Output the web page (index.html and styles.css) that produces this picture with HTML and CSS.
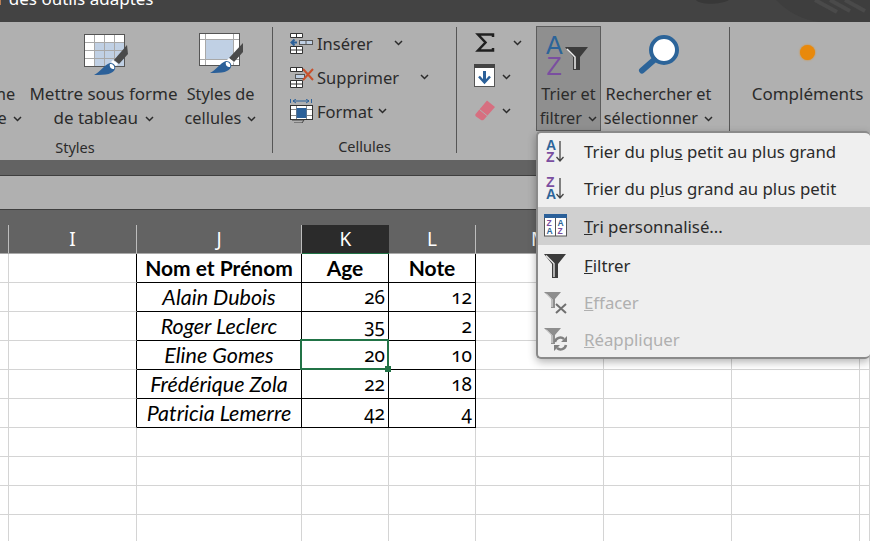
FILE: index.html
```html
<!DOCTYPE html>
<html lang="fr">
<head>
  <meta charset="UTF-8">
  <meta name="viewport" content="width=device-width, initial-scale=1.0">
  <title>Trier et filtrer</title>
  <link rel="stylesheet" href="styles.css">
</head>
<body>
  <svg class="defs" width="0" height="0">
    <symbol id="chev" viewBox="0 0 9 6"><path d="M1 1l3.500 3.500L8 1" fill="none" stroke="#2b2b2b" stroke-width="1.500"/></symbol>
  </svg>

  <div class="titlebar">
    <span class="tell">Rechercher des outils adaptés</span>
    <svg class="deco" width="180" height="22" viewBox="0 0 180 22">
      <path d="M6 0c4 5 24 5 33 0z" fill="#383838"/>
      <path d="M86 0c12 12 26 20 44 22h50V0z" fill="#3e3e3e"/>
      <path d="M125 0l22 12M140 0l20 11M155 0l20 11" stroke="#4a4a4a" stroke-width="4"/>
    </svg>
  </div>

  <div class="ribbon">
    <!-- Styles -->
    <div class="group g-styles">
      <div class="tools">
        <div class="big b-cond">
          <div class="ico"></div>
          <div class="lbl">Mise en forme<br>conditionnelle <svg class="chev"><use href="#chev"/></svg></div>
        </div>
        <div class="big b-table">
          <div class="ico">
            <svg width="46" height="46" viewBox="0 0 46 46">
              <rect x="1.500" y="2.500" width="40" height="32" fill="#fff" stroke="#555"/>
              <rect x="11" y="11" width="30" height="23" fill="#c0d0e4"/>
              <path d="M11.500 3v31M21.500 3v31M31.500 3v31M2 10.500h39M2 18.500h39M2 26.500h39" stroke="#a8a8a8"/>
              <path d="M44 13l1 9-9 10-5-4z" fill="#4a4a4a"/>
              <path d="M30 28l5 4-2 2-5-4z" fill="#fff"/>
              <path d="M27 31c4 0 6 3 5 6-2 5-8 6-21 6 6-3 10-10 16-12z" fill="#2b6099"/>
              <path d="M27 32c3 0 5 2 4 5-3 0-5-2-4-5z" fill="#fff"/>
            </svg>
          </div>
          <div class="lbl">Mettre sous forme<br>de tableau <svg class="chev"><use href="#chev"/></svg></div>
        </div>
        <div class="big b-cell">
          <div class="ico">
            <svg width="46" height="46" viewBox="0 0 46 46">
              <rect x="1.500" y="1.500" width="40" height="32" fill="#fff" stroke="#555"/>
              <rect x="8" y="8" width="27" height="19" fill="#c0d0e4"/>
              <path d="M7.500 2v31M35.500 2v31M2 7.500h39M2 27.500h39" stroke="#a8a8a8"/>
              <path d="M45 11l0 9-9 10-5-4z" fill="#4a4a4a"/>
              <path d="M31 26l5 4-2 2-5-4z" fill="#fff"/>
              <path d="M28 29c4 0 6 3 5 6-2 5-8 6-21 6 6-3 10-10 16-12z" fill="#2b6099"/>
              <path d="M28 30c3 0 5 2 4 5-3 0-5-2-4-5z" fill="#fff"/>
            </svg>
          </div>
          <div class="lbl">Styles de<br>cellules <svg class="chev"><use href="#chev"/></svg></div>
        </div>
      </div>
      <div class="gname">Styles</div>
    </div>

    <!-- Cellules -->
    <div class="group g-cells">
      <div class="stack">
        <div class="small">
          <svg class="sico" width="23" height="22" viewBox="0 0 23 22">
            <path d="M.5 1.500h12v4H.5zM6.500 1.500v4M.5 14.500h12v7H.5zM.5 18h12M6.500 14.500v7" fill="#fff" stroke="#333"/>
            <rect x="9.500" y="8.500" width="13" height="4" fill="#c0d0e4" stroke="#555"/>
            <path d="M16 8.500v4" stroke="#555"/>
            <path d="M7 10.500H2M4.500 7.500l-3 3 3 3" fill="none" stroke="#2b6099" stroke-width="2"/>
          </svg>
          <span class="s-ins">Insérer</span>
          <svg class="chev c-ins"><use href="#chev"/></svg>
        </div>
        <div class="small">
          <svg class="sico" width="25" height="22" viewBox="0 0 25 22">
            <path d="M.5 1.500h12v4H.5zM6.500 1.500v4M.5 14.500h12v7H.5zM.5 18h12M6.500 14.500v7" fill="#fff" stroke="#333"/>
            <rect x="5.500" y="8.500" width="9" height="4" fill="#c0d0e4" stroke="#555"/>
            <path d="M13 3l10 11M23 3L13 14" stroke="#c8502c" stroke-width="2"/>
          </svg>
          <span class="s-sup">Supprimer</span>
          <svg class="chev c-sup"><use href="#chev"/></svg>
        </div>
        <div class="small">
          <svg class="sico" width="23" height="24" viewBox="0 0 23 24">
            <path d="M.5 0v4M21.500 0v4" stroke="#2b6099"/>
            <path d="M3 2h16M6 0L3 2l3 2M16 0l3 2-3 2" fill="none" stroke="#2b6099"/>
            <rect x=".5" y="6.500" width="22" height="14" fill="#fff" stroke="#333"/>
            <path d="M6.500 7v13M16.500 7v13M1 10.500h21M1 16.500h21" stroke="#888"/>
            <rect x="6.500" y="9" width="10" height="10" fill="#2b6099"/>
            <path d="M2 21h12l-2 3H4" fill="none" stroke="#444"/>
          </svg>
          <span class="s-ins">Format</span>
          <svg class="chev c-fmt"><use href="#chev"/></svg>
        </div>
      </div>
      <div class="gname">Cellules</div>
    </div>

    <!-- Edition -->
    <div class="group g-edit">
      <div class="tools">
        <div class="stack s-edit">
          <div class="small">
            <svg class="sico" width="22" height="22" viewBox="0 0 22 22">
              <path d="M19 5V2.500H4l7.500 8-7.500 8h15V16" fill="none" stroke="#1f1f1f" stroke-width="2.500"/>
            </svg>
            <svg class="chev c-sum"><use href="#chev"/></svg>
          </div>
          <div class="small">
            <svg class="sico s-fill" width="22" height="23" viewBox="0 0 22 23">
              <rect x=".5" y=".5" width="20" height="22" fill="#fff" stroke="#555"/>
              <rect x="0" y="0" width="21" height="4" fill="#444"/>
              <path d="M10.500 7v10" stroke="#2b6099" stroke-width="3"/>
              <path d="M5 12.500l5.500 6 5.500-6" fill="none" stroke="#2b6099" stroke-width="2.500"/>
            </svg>
            <svg class="chev c-edit"><use href="#chev"/></svg>
          </div>
          <div class="small">
            <svg class="sico" width="22" height="22" viewBox="0 0 22 22">
              <path d="M13 .5l8 6.500-11 12.500c-1 1-2 1-3 .5l-5-3.500c-1-1-1-2 0-3z" fill="#d66f80"/>
              <path d="M5.500 9.500l8 6.500" stroke="#b0b0b0"/>
            </svg>
            <svg class="chev c-edit"><use href="#chev"/></svg>
          </div>
        </div>

        <div class="big b-sort">
          <div class="ico">
            <svg width="56" height="46" viewBox="0 0 56 46">
              <text class="az-a" x="5" y="22">A</text>
              <text class="az-z" x="5.500" y="43">Z</text>
              <path d="M24 15h23l-8 10v13h-7V25z" fill="#3c3c3c"/>
              <path d="M26 17l8 8v12" fill="none" stroke="#eee" stroke-width="1.500"/>
            </svg>
          </div>
          <div class="lbl">Trier et<br>filtrer <svg class="chev"><use href="#chev"/></svg></div>
        </div>

        <div class="big b-find">
          <div class="ico">
            <svg width="44" height="44" viewBox="0 0 44 44">
              <circle cx="27" cy="17" r="13" fill="#fff" stroke="#2c6499" stroke-width="4"/>
              <path d="M17 27L5 37.500" stroke="#2c6499" stroke-width="6" stroke-linecap="round"/>
            </svg>
          </div>
          <div class="lbl">Rechercher et<br>sélectionner <svg class="chev"><use href="#chev"/></svg></div>
        </div>
      </div>
    </div>

    <!-- Complements -->
    <div class="group g-addin">
      <div class="big">
        <div class="ico"><span class="dot"></span></div>
        <div class="lbl">Compléments</div>
      </div>
    </div>
  </div>

  <div class="strip"></div>
  <div class="formula"></div>

  <table class="sheet">
    <colgroup>
      <col class="c-h"><col class="c-i"><col class="c-j"><col class="c-k"><col class="c-k"><col class="c-i"><col class="c-i"><col class="c-i"><col class="c-p">
    </colgroup>
    <thead>
      <tr>
        <th><div></div></th><th><div>I</div></th><th><div>J</div></th><th class="sel"><div>K</div></th><th><div>L</div></th><th><div>M</div></th><th><div>N</div></th><th><div>O</div></th><th><div></div></th>
      </tr>
    </thead>
    <tbody>
      <tr class="head"><td></td><td class="edge"></td><td class="b">Nom et Prénom</td><td class="b">Age</td><td class="b">Note</td><td></td><td></td><td></td><td></td></tr>
      <tr><td></td><td class="edge"></td><td class="b name">Alain Dubois</td><td class="b num">26</td><td class="b num">12</td><td></td><td></td><td></td><td></td></tr>
      <tr><td></td><td class="edge"></td><td class="b name">Roger Leclerc</td><td class="b num">35</td><td class="b num">2</td><td></td><td></td><td></td><td></td></tr>
      <tr><td></td><td class="edge"></td><td class="b name">Eline Gomes</td><td class="b num active">20</td><td class="b num">10</td><td></td><td></td><td></td><td></td></tr>
      <tr><td></td><td class="edge"></td><td class="b name">Frédérique Zola</td><td class="b num">22</td><td class="b num">18</td><td></td><td></td><td></td><td></td></tr>
      <tr><td></td><td class="edge"></td><td class="b name">Patricia Lemerre</td><td class="b num">42</td><td class="b num">4</td><td></td><td></td><td></td><td></td></tr>
      <tr><td></td><td></td><td></td><td></td><td></td><td></td><td></td><td></td><td></td></tr>
      <tr><td></td><td></td><td></td><td></td><td></td><td></td><td></td><td></td><td></td></tr>
      <tr><td></td><td></td><td></td><td></td><td></td><td></td><td></td><td></td><td></td></tr>
      <tr><td></td><td></td><td></td><td></td><td></td><td></td><td></td><td></td><td></td></tr>
    </tbody>
  </table>

  <div class="menu">
    <div class="item">
      <svg width="26" height="28" viewBox="0 0 26 28">
        <text class="m-a" x="3" y="12">A</text><text class="m-z" x="3" y="24">Z</text>
        <path d="M17 3v20M13.500 19l3.500 4 3.500-4" fill="none" stroke="#444" stroke-width="1.300"/>
      </svg>
      <span>Trier du plu<u>s</u> petit au plus grand</span>
    </div>
    <div class="item">
      <svg width="26" height="28" viewBox="0 0 26 28">
        <text class="m-z" x="3" y="12">Z</text><text class="m-a" x="3" y="24">A</text>
        <path d="M17 3v20M13.500 19l3.500 4 3.500-4" fill="none" stroke="#444" stroke-width="1.300"/>
      </svg>
      <span>Trier du p<u>l</u>us grand au plus petit</span>
    </div>
    <div class="item hover">
      <svg width="26" height="24" viewBox="-1 0 26 24">
        <rect x=".5" y="1" width="22" height="21" fill="#fff" stroke="#555"/>
        <rect x="0" y="0" width="23" height="4" fill="#2b6099"/>
        <path d="M11.500 4v18" stroke="#555"/>
        <text class="t-z" x="2.500" y="12">Z</text><text class="t-a" x="2.500" y="20">A</text>
        <text class="t-a" x="13.500" y="12">A</text><text class="t-z" x="13.500" y="20">Z</text>
      </svg>
      <span><u>T</u>ri personnalisé...</span>
    </div>
    <div class="item">
      <svg width="26" height="26" viewBox="-1 0 26 26">
        <path d="M0 1h22l-8 10v14H8V11z" fill="#3c3c3c"/>
        <path d="M2 2.500l8 8V24" fill="none" stroke="#eee" stroke-width="1.300"/>
      </svg>
      <span><u>F</u>iltrer</span>
    </div>
    <div class="item off">
      <svg width="26" height="26" viewBox="-1 0 26 26">
        <path d="M0 2h17l-6 7v9H7V9z" fill="#8e8e8e"/>
        <path d="M2 3.500l6 6V17" fill="none" stroke="#eee"/>
        <path d="M12 14l10 9M22 14l-10 9" stroke="#707070" stroke-width="2"/>
      </svg>
      <span><u>E</u>ffacer</span>
    </div>
    <div class="item off">
      <svg width="26" height="26" viewBox="-1 0 26 26">
        <path d="M0 1h17l-6 7v9H7V8z" fill="#8e8e8e"/>
        <path d="M2 2.500l6 6V16" fill="none" stroke="#eee"/>
        <path d="M11 15a5.500 5.500 0 0 1 9-3M22 18a5.500 5.500 0 0 1-9 3" fill="none" stroke="#808080" stroke-width="2.500"/>
        <path d="M23 9v6h-6zM10 24v-6h6z" fill="#808080"/>
      </svg>
      <span><u>R</u>éappliquer</span>
    </div>
  </div>
</body>
</html>
```

FILE: styles.css
```css
html, body {
  margin: 0;
  padding: 0;
}
body {
  position: relative;
  width: 870px;
  height: 541px;
  overflow: hidden;
  background: #fff;
  font-family: "Noto Sans", "Open Sans", sans-serif;
  color: #2b2b2b;
}
.defs {
  position: absolute;
}

/* title bar */
.titlebar {
  position: relative;
  height: 22px;
  background: #434343;
  overflow: hidden;
}
.tell {
  display: block;
  margin: -12px 0 0 -86px;
  color: #fff;
  font-size: 17px;
  line-height: 22px;
  white-space: nowrap;
}
.deco {
  position: absolute;
  top: 0;
  right: 0;
}

/* ribbon */
.ribbon {
  display: flex;
  height: 138px;
  box-sizing: border-box;
  padding-top: 5px;
  background: #b0b0b0;
}
.group {
  display: flex;
  flex-direction: column;
  flex: none;
  height: 126px;
  box-sizing: border-box;
  border-right: 1px solid #565656;
}
.tools {
  display: flex;
  flex: 1;
}
.gname {
  height: 24px;
  font-size: 14.500px;
  line-height: 34px;
  text-align: center;
}
.g-styles {
  width: 395px;
  margin-left: -122px;
  padding-left: 20px;
}
.g-styles .gname {
  margin-left: -20px;
}
.g-cells {
  width: 184px;
  padding-left: 17px;
}
.g-cells .gname {
  margin-left: -17px;
}
.g-edit {
  width: 273px;
  padding-left: 17px;
}
.g-addin {
  width: 140px;
  border-right: 0;
  padding-left: 15px;
}
.g-addin .lbl {
  font-size: 17px;
}

/* big buttons */
.big {
  display: flex;
  flex-direction: column;
  align-items: center;
  flex: none;
}
.ico {
  display: flex;
  align-items: center;
  justify-content: center;
  height: 55px;
}
.lbl {
  font-size: 16.300px;
  line-height: 24px;
  text-align: center;
  white-space: nowrap;
}
.chev {
  width: 9px;
  height: 6px;
  margin-left: 2px;
  vertical-align: 2px;
}
.b-cond {
  width: 124px;
  margin-right: 8px;
}
.b-table {
  width: 147px;
  margin-right: 7px;
}
.b-table .lbl {
  font-size: 17px;
}
.b-table .ico svg {
  margin-left: 5px;
}
.b-cell {
  width: 73px;
}
.b-sort {
  width: 65px;
  height: 105px;
  box-sizing: border-box;
  margin-top: -1px;
  border: 1px solid #5c5c5c;
  background: #8f8f8f;
}
.az-a, .az-z {
  font-family: "Liberation Sans", sans-serif;
  font-size: 25px;
}
.az-a {
  fill: #2c6499;
}
.az-z {
  fill: #7a4ea0;
}
.b-find {
  width: 109px;
  margin-left: 3px;
}
.dot {
  width: 15px;
  height: 15px;
  margin-top: -4px;
  border-radius: 50%;
  background: #e8890c;
  box-shadow: 0 0 2px #e8890c;
}

/* small buttons */
.stack {
  flex: 1;
  margin-top: -1px;
}
.s-edit {
  flex: none;
  width: 62px;
}
.small {
  display: flex;
  align-items: center;
  height: 34px;
  font-size: 16.500px;
  white-space: nowrap;
}
.sico {
  flex: none;
  margin-right: 5px;
}
.s-fill {
  margin-top: -3px;
}
.small .s-ins {
  margin-left: -1px;
}
.small .s-sup {
  margin-left: -3px;
}
.c-ins {
  margin-left: 21px;
}
.c-sup {
  margin-left: 21px;
}
.c-fmt {
  margin-left: 5px;
}
.c-sum {
  margin-left: 12px;
}
.c-edit {
  margin-left: 1px;
}

/* bars under the ribbon */
.strip {
  height: 15px;
  border-bottom: 1px solid #3f3f3f;
  background: #636363;
}
.formula {
  height: 33px;
  border-bottom: 1px solid #3f3f3f;
  background: #b0b0b0;
}

/* sheet */
.sheet {
  width: 870px;
  border-collapse: separate;
  border-spacing: 0;
  table-layout: fixed;
  font-family: Lato, "Open Sans", sans-serif;
}
.c-h { width: 9px; }
.c-i { width: 128px; }
.c-j { width: 165px; }
.c-k { width: 87px; }
.c-p { width: 10px; }
th {
  height: 44px;
  box-sizing: border-box;
  padding: 15px 0 0;
  border-bottom: 1px solid #a9a9a9;
  background: #636363;
  color: #fff;
  font-family: "Noto Sans", sans-serif;
  font-size: 19px;
  font-weight: 400;
}
th div {
  height: 28px;
  box-sizing: border-box;
  border-right: 1px solid #bdbdbd;
  line-height: 28px;
}
.sel div {
  border-right: 0;
  background: #2b2b2b;
}
th.sel {
  border-bottom: 1px solid #217346;
}
td {
  height: 29px;
  box-sizing: border-box;
  padding: 0;
  border-right: 1px solid #d4d4d4;
  border-bottom: 1px solid #d4d4d4;
  color: #000;
  font-size: 21px;
  line-height: 26px;
  text-align: center;
  white-space: nowrap;
}
td.edge {
  border-right-color: #000;
}
td.b {
  border-right-color: #000;
  border-bottom-color: #000;
}
.head td {
  font-weight: 700;
}
td.name {
  font-size: 21.500px;
  font-weight: 400;
  font-style: italic;
}
td.num {
  padding-right: 3px;
  font-family: "Noto Sans", sans-serif;
  font-size: 19px;
  font-variant-numeric: oldstyle-nums;
  text-align: right;
}
.active {
  position: relative;
}
.active::before {
  content: "";
  position: absolute;
  top: -2px;
  left: -2px;
  right: -1px;
  bottom: -1px;
  border: 2px solid #217346;
}
.active::after {
  content: "";
  position: absolute;
  right: -3px;
  bottom: -3px;
  width: 6px;
  height: 6px;
  background: #217346;
}

/* sort menu */
.menu {
  position: absolute;
  top: 131px;
  left: 536px;
  width: 334px;
  height: 228px;
  box-sizing: border-box;
  border: 2px solid #8a8a8a;
  border-right: 0;
  border-radius: 5px;
  background: #efefef;
  box-shadow: 0 3px 9px rgba(0, 0, 0, .3);
}
.item {
  display: flex;
  align-items: center;
  height: 37px;
  padding-left: 5px;
  font-size: 16.800px;
  color: #2b2b2b;
  white-space: nowrap;
}
.item svg {
  flex: none;
  width: 26px;
  margin-right: 15px;
}
.item:nth-child(4) {
  margin-top: 2px;
}
.hover {
  height: 38px;
  background: #d0d0d0;
}
.off {
  color: #b0b0b0;
}
.m-a, .m-z, .t-a, .t-z {
  font-family: "Liberation Sans", sans-serif;
  font-weight: 700;
}
.m-a, .m-z {
  font-size: 14px;
}
.t-a, .t-z {
  font-size: 8.500px;
}
.m-a, .t-a {
  fill: #2c6499;
}
.m-z, .t-z {
  fill: #7a4ea0;
}
```
